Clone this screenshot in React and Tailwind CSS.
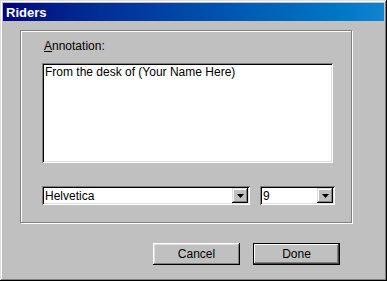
import React from 'react';

const font = { fontFamily: '"Liberation Sans", Arial, sans-serif' };

const ArrowButton = () => (
  <div className="w-[16px] h-[15px] bg-[#c0c0c0] shadow-[inset_-1px_-1px_#000,inset_1px_1px_#dfdfdf,inset_-2px_-2px_#808080,inset_2px_2px_#fff] flex items-center justify-center">
    <svg width="7" height="4" viewBox="0 0 7 4">
      <path d="M0 0h7L3.5 4z" fill="#000" />
    </svg>
  </div>
);

const Select = ({ value, width }) => (
  <div
    className={`${width} h-[19px] bg-white shadow-[inset_1px_1px_#808080,inset_-1px_-1px_#fff,inset_2px_2px_#000,inset_-2px_-2px_#dfdfdf] flex items-center pl-[3px] pr-[2px]`}
  >
    <span className="flex-1 text-[12px] leading-[14px] text-black">{value}</span>
    <ArrowButton />
  </div>
);

const Button = ({ label, isDefault }) => (
  <div
    className={`w-[87px] h-[22px] flex items-center justify-center text-[12px] text-black bg-[#c0c0c0] ${
      isDefault
        ? 'border border-black shadow-[inset_-1px_-1px_#404040,inset_1px_1px_#fff,inset_-2px_-2px_#808080]'
        : 'shadow-[inset_-1px_-1px_#000,inset_1px_1px_#fff,inset_-2px_-2px_#808080,inset_2px_2px_#dfdfdf]'
    }`}
  >
    {label}
  </div>
);

export default function App() {
  return (
    <div
      style={font}
      className="w-[387px] h-[281px] bg-[#c0c0c0] p-[3px] shadow-[inset_-1px_-1px_#000,inset_1px_1px_#dfdfdf,inset_-2px_-2px_#808080,inset_2px_2px_#fff] flex flex-col"
    >
      {/* Title bar */}
      <div className="h-[18px] bg-gradient-to-r from-[#000080] to-[#1084d0] flex items-center pl-[3px]">
        <span className="text-white font-bold text-[13px] leading-none">Riders</span>
      </div>

      {/* Group box */}
      <div className="ml-[17px] mt-[9px] w-[332px] h-[193px] border border-[#808080] shadow-[1px_1px_0_#fff,inset_1px_1px_0_#fff] pl-[21px] pt-[8px] flex flex-col">
        <div className="pl-[2px] text-[12px] leading-[14px] text-black">
          <span className="underline">A</span>nnotation:
        </div>
        <div className="mt-[10px] w-[291px] h-[100px] bg-white shadow-[inset_1px_1px_#808080,inset_-1px_-1px_#fff,inset_2px_2px_#000,inset_-2px_-2px_#dfdfdf] pl-[3px] pt-[2px] text-[12px] leading-[14px] text-black">
          From the desk of (Your Name Here)
        </div>
        <div className="mt-[23px] flex gap-[10px]">
          <Select value="Helvetica" width="w-[208px]" />
          <Select value="9" width="w-[75px]" />
        </div>
      </div>

      {/* Buttons */}
      <div className="mt-[20px] ml-[150px] flex gap-[13px]">
        <Button label="Cancel" />
        <Button label="Done" isDefault />
      </div>
    </div>
  );
}
